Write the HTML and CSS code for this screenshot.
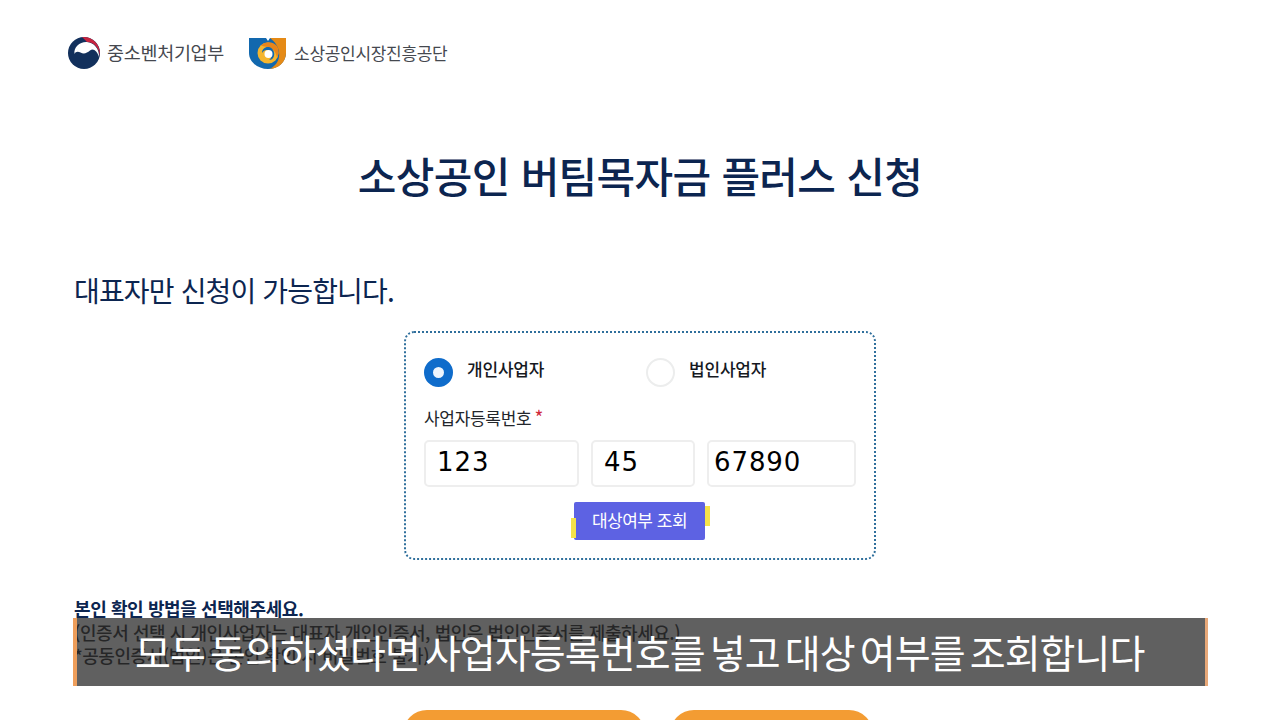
FILE: index.html
```html
<!DOCTYPE html>
<html lang="ko">
<head>
    <meta charset="UTF-8">
    <meta name="viewport" content="width=device-width, initial-scale=1.0">
    <title>소상공인 버팀목자금 플러스 신청</title>
    <link rel="stylesheet" href="styles.css">
</head>
<body>

    <header class="logos">
        <div class="logo">
            <svg viewBox="0 0 32 32" width="32" height="32">
                <circle cx="16" cy="16" r="16" fill="#12305c"/>
                <path d="M6.500 17 C5.500 10 12 4.500 19 5 C26 5.500 31.500 12 31 20 C29 14 25.500 11 22 13.500 C19 16 16 17.500 12.500 15.500 C10 14.200 7.500 14.500 6.500 17Z" fill="#fff"/>
                <path d="M14 .1 C24 -.8 33 7 32 19 C31 11 26 5 19 5 C17 3 15.500 1.500 14 .1Z" fill="#c8243f"/>
            </svg>
            <span class="logoName">중소벤처기업부</span>
        </div>
        <div class="logo">
            <svg viewBox="0 0 38 32" width="38" height="32">
                <path d="M0 1 H17 L19 4 L21 1 H37 V16 C37 25 29 32 19 32 C9 32 0 25 0 16Z" fill="#1268ae"/>
                <path d="M21 1 H37 V16 C37 25 29 32 21 31.800 C28 28 31 22 30 15 C29 9 26 5 21 1Z" fill="#e58a16"/>
                <circle cx="19" cy="16" r="10.500" fill="#f4b52e"/>
                <path d="M12 8.500 C16 4 24 4 28 9 C30 12 30 17 28 21 C27 15 24 11 19 10 C16.500 9.500 14 9.500 12 8.500Z" fill="#e8851a"/>
                <path d="M13 16 C13 12 16 9.500 20 10 C24 11 26 15 25 19 C24 22 22 23 20 23 C23 21 23.500 17 21 14.500 C18 12 15 13 13 16Z" fill="#1268ae"/>
                <circle cx="19.500" cy="17" r="4" fill="#fff"/>
            </svg>
            <span class="logoName second">소상공인시장진흥공단</span>
        </div>
    </header>

    <h1 class="title">소상공인 버팀목자금 플러스 신청</h1>

    <p class="notice">대표자만 신청이 가능합니다.</p>

    <section class="checkBox">
        <div class="radioRow">
            <label class="radioItem">
                <span class="radio on"></span>
                <span class="radioText">개인사업자</span>
            </label>
            <label class="radioItem">
                <span class="radio"></span>
                <span class="radioText">법인사업자</span>
            </label>
        </div>
        <div class="fieldLabel">사업자등록번호<span class="star">*</span></div>
        <div class="fieldRow">
            <div class="numInput first">123</div>
            <div class="numInput middle">45</div>
            <div class="numInput third">67890</div>
        </div>
        <div class="btnRow">
            <button class="checkBtn" type="button">대상여부 조회</button>
        </div>
    </section>

    <section class="method">
        <h2>본인 확인 방법을 선택해주세요.</h2>
        <p>(인증서 선택 시 개인사업자는 대표자 개인인증서, 법인은 법인인증서를 제출하세요.)</p>
        <p>*공동인증서(법인)은 본인 확인 시 비밀번호 불가)</p>
    </section>

    <div class="authRow">
        <div class="authBtn wide"></div>
        <div class="authBtn"></div>
    </div>

    <div class="caption">모두 동의하셨다면 사업자등록번호를 넣고 대상 여부를 조회합니다</div>

</body>
</html>
```

FILE: styles.css
```css
*{
    box-sizing: border-box;
}
html,body{
    height: 720px;
    overflow: hidden;
}
body{
    position: relative;
    margin: 0;
    background-color: #fff;
    color: #0c2550;
    font-family: "Noto Sans CJK KR", "Noto Sans", sans-serif;
}
.logos{
    display: flex;
    gap: 25px;
    height: 105px;
    padding: 37px 0 0 68px;
}
.logo{
    display: flex;
    align-items: center;
    gap: 7px;
    height: 32px;
}
.logoName{
    padding-bottom: 2px;
    color: #45484f;
    font-size: 18.500px;
    letter-spacing: -0.3px;
}
.logoName.second{
    font-size: 17px;
    letter-spacing: -0.3px;
}
.title{
    margin: 0;
    height: 146px;
    padding-top: 40px;
    text-align: center;
    font-size: 42px;
    font-weight: 500;
    line-height: 60px;
    letter-spacing: -0.7px;
}
.notice{
    margin: 0 0 0 74px;
    height: 80px;
    padding-top: 19px;
    font-size: 28px;
    line-height: 41px;
    letter-spacing: -0.85px;
}
.checkBox{
    width: 472px;
    height: 229px;
    margin: 0 auto;
    padding: 24px 18px 0;
    border: 2px dotted #2f6f9c;
    border-radius: 10px;
}
.radioRow{
    display: flex;
    height: 30px;
}
.radioItem{
    flex: none;
    display: flex;
    align-items: center;
    gap: 14px;
    width: 222px;
    color: #16191f;
    font-size: 17px;
    font-weight: 500;
    letter-spacing: -0.2px;
}
.radioText{
    margin-bottom: 8px;
}
.radio{
    width: 29px;
    height: 29px;
    border: 2px solid #eceded;
    border-radius: 50%;
    background-color: #fff;
}
.radio.on{
    border: 9px solid #0f6ccb;
    background-color: #eef5fd;
}
.fieldLabel{
    margin-top: 18px;
    color: #23262b;
    font-size: 17px;
    line-height: 24px;
    letter-spacing: -0.3px;
}
.star{
    margin-left: 3px;
    color: #d0283c;
    font-size: 19px;
}
.fieldRow{
    display: flex;
    gap: 12px;
    margin-top: 10px;
}
.numInput{
    flex: none;
    height: 47px;
    border: 2px solid #eeeeee;
    border-radius: 5px;
    color: #000;
    font-family: "DejaVu Sans", sans-serif;
    font-size: 26px;
    line-height: 41px;
    letter-spacing: 0.9px;
}
.first{
    width: 155px;
    padding-left: 11px;
}
.middle{
    width: 104px;
    padding-left: 11px;
}
.third{
    width: 149px;
    padding-left: 5px;
}
.btnRow{
    display: flex;
    justify-content: center;
    margin-top: 15px;
    padding-right: 1px;
}
.checkBtn{
    position: relative;
    width: 131px;
    height: 38px;
    padding: 0 0 4px;
    border: 0;
    border-radius: 2px;
    background-color: #5d62e3;
    color: #fff;
    font-family: inherit;
    font-size: 17px;
    letter-spacing: -0.5px;
}
.checkBtn::before,
.checkBtn::after{
    content: '';
    position: absolute;
    width: 5px;
    height: 20px;
    background-color: #f5e24a;
}
.checkBtn::before{
    left: -3px;
    top: 16px;
}
.checkBtn::after{
    right: -5px;
    top: 4px;
}
.method{
    margin: 36px 0 0 74px;
}
.method h2{
    margin: 0 0 1px;
    font-size: 18px;
    font-weight: 700;
    line-height: 24px;
    letter-spacing: -0.4px;
}
.method p{
    margin: 0;
    color: #0d1014;
    font-size: 18px;
    font-weight: 500;
    line-height: 23px;
    letter-spacing: -0.45px;
}
.authRow{
    position: absolute;
    left: 403px;
    top: 710px;
    display: flex;
    gap: 25px;
}
.authBtn{
    width: 203px;
    height: 40px;
    border-radius: 24px 24px 0 0;
    background-color: #f39c33;
}
.authBtn.wide{
    width: 242px;
}
.caption{
    position: absolute;
    left: 73px;
    top: 618px;
    width: 1135px;
    height: 68px;
    padding-left: 58px;
    border-left: 4px solid #ee9e5b;
    border-right: 3px solid #e8a878;
    background-color: rgba(46, 46, 46, 0.76);
    color: #fff;
    font-size: 39px;
    line-height: 66px;
    letter-spacing: -0.9px;
    word-spacing: -5px;
    white-space: nowrap;
}
```
